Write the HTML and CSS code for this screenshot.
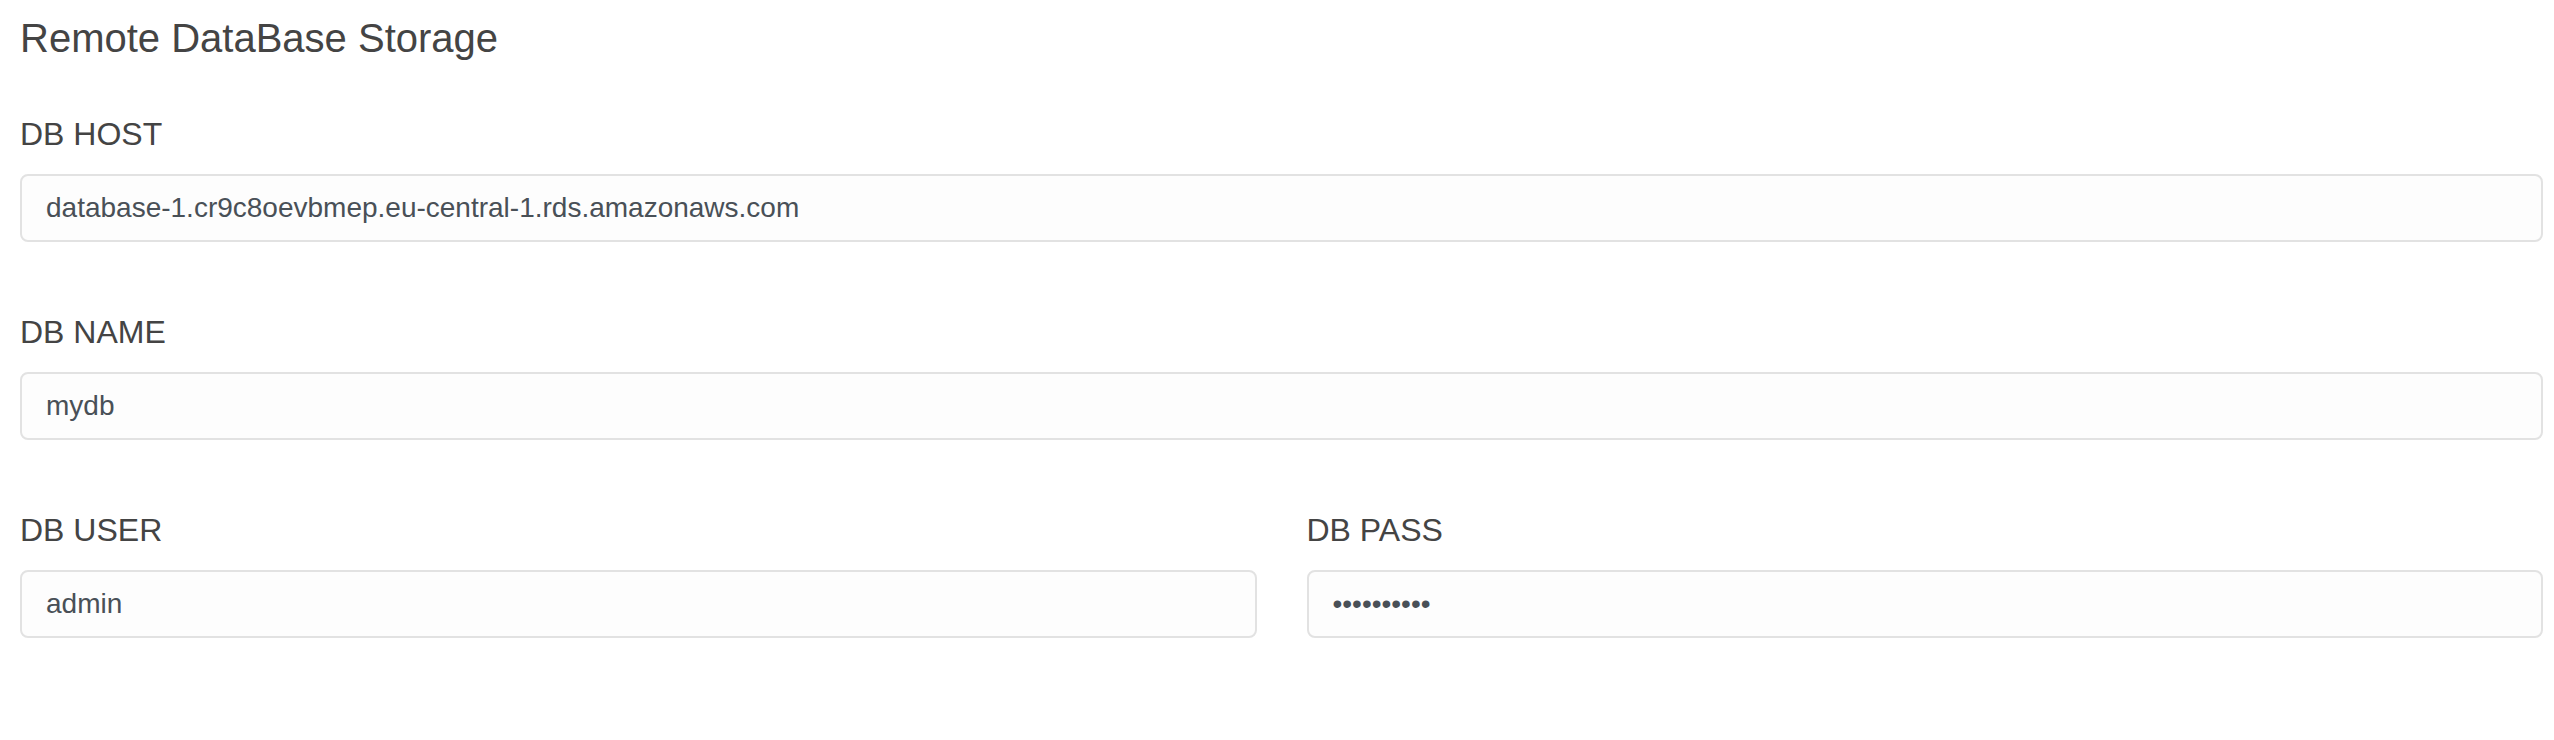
FILE: index.html
```html
<!DOCTYPE html>
<html lang="en">

<head>
    <meta charset="UTF-8">
    <meta name="viewport" content="width=device-width, initial-scale=1.0">
    <title>Remote DataBase Storage</title>
    <link rel="stylesheet" href="styles.css">
</head>

<body>
    <div id="container">
        <h2 class="title">Remote DataBase Storage</h2>
        <form class="db-form">
            <div class="form-group">
                <label for="db_host">DB HOST</label>
                <input type="text" id="db_host" name="db_host" value="database-1.cr9c8oevbmep.eu-central-1.rds.amazonaws.com">
            </div>

            <div class="form-group">
                <label for="db_name">DB NAME</label>
                <input type="text" id="db_name" name="db_name" value="mydb">
            </div>

            <div class="form-row">
                <div class="form-group">
                    <label for="db_user">DB USER</label>
                    <input type="text" id="db_user" name="db_user" value="admin">
                </div>
                <div class="form-group">
                    <label for="db_pass">DB PASS</label>
                    <input type="password" id="db_pass" name="db_pass" value="secretpass">
                </div>
            </div>
        </form>
    </div>
</body>

</html>
```

FILE: styles.css
```css
body {
    font-family: "Liberation Sans", Arial, sans-serif;
    margin: 0;
    padding: 0;
    background-color: #fff;
    color: #444;
}

#container {
    padding: 14px 11px 0 20px;
}

.title {
    margin: 0;
    font-size: 40px;
    line-height: 48px;
    font-weight: normal;
    color: #444;
}

.db-form {
    display: flex;
    flex-direction: column;
    gap: 70px;
    margin-top: 52px;
}

.form-row {
    display: grid;
    grid-template-columns: 1fr 1fr;
    gap: 50px;
}

.form-group label {
    display: block;
    font-size: 32px;
    line-height: 40px;
    margin-bottom: 20px;
    color: #444;
}

.form-group input {
    display: block;
    width: 100%;
    box-sizing: border-box;
    height: 68px;
    margin: 0;
    padding: 0 24px;
    border: 2px solid #e2e2e2;
    border-radius: 8px;
    background-color: #fdfdfd;
    font-family: "Liberation Sans", Arial, sans-serif;
    font-size: 28px;
    color: #495057;
    outline: none;
}
```
